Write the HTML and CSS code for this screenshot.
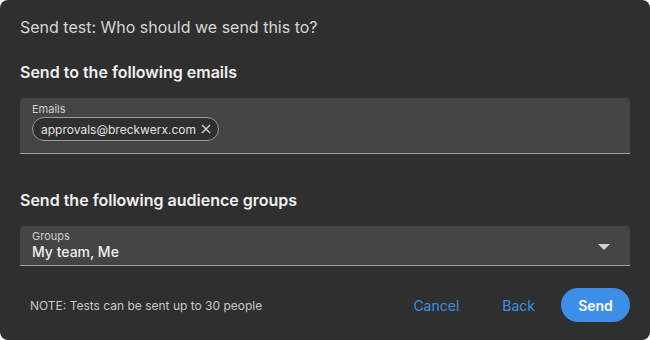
FILE: index.html
```html
<!DOCTYPE html>
<html lang="en">
<head>
    <meta charset="UTF-8">
    <title>Send test</title>
    <link rel="stylesheet" href="styles.css">
</head>
<body>
    <div class="dialog">
        <h1 class="dialog-title">Send test: Who should we send this to?</h1>

        <section class="group">
            <h2>Send to the following emails</h2>
            <div class="field field-emails">
                <label>Emails</label>
                <div class="chips">
                    <span class="chip">approvals@breckwerx.com
                        <svg class="chip-x" width="10" height="10" viewBox="0 0 10 10"><path d="M1 1L9 9M9 1L1 9" stroke="#d0d0d0" stroke-width="1.4" fill="none"/></svg>
                    </span>
                </div>
            </div>
        </section>

        <section class="group group-audience">
            <h2>Send the following audience groups</h2>
            <div class="field field-select">
                <div class="field-text">
                    <label>Groups</label>
                    <div class="value">My team, Me</div>
                </div>
                <svg class="caret" width="12" height="6" viewBox="0 0 12 6"><path d="M0 0H12L6 6Z" fill="#cfcfe0"/></svg>
            </div>
        </section>

        <footer class="dialog-footer">
            <span class="note">NOTE: Tests can be sent up to 30 people</span>
            <div class="actions">
                <button class="btn-text btn-cancel">Cancel</button>
                <button class="btn-text btn-back">Back</button>
                <button class="btn-primary">Send</button>
            </div>
        </footer>
    </div>
</body>
</html>
```

FILE: styles.css
```css
/* General */
body {
    margin: 0;
    background-color: #fff;
    font-family: Inter, "Liberation Sans", sans-serif;
}
.dialog {
    width: 650px;
    height: 340px;
    box-sizing: border-box;
    padding: 17px 20px 0;
    border-radius: 8px;
    background-color: #2f2f2f;
    display: flex;
    flex-direction: column;
}
.dialog-title {
    margin: 0;
    font-size: 16px;
    font-weight: 400;
    line-height: 20px;
    color: #d6d6d6;
}
.group h2 {
    margin: 25px 0 16px;
    font-size: 16px;
    font-weight: 600;
    line-height: 20px;
    color: #f0f0f0;
}
.group-audience h2 {
    margin-top: 36px;
}
/* Fields */
.field {
    background-color: #444;
    border-radius: 4px 4px 0 0;
    border-bottom: 1px solid #a0a0a0;
    box-sizing: border-box;
}
.field label {
    display: block;
    font-size: 11px;
    line-height: 13px;
    color: #d0d0d0;
}
.field-emails {
    height: 56px;
    padding: 5px 12px 0;
}
.chips {
    margin-top: 1px;
    display: flex;
}
.chip {
    display: inline-flex;
    align-items: center;
    gap: 5px;
    height: 24px;
    box-sizing: border-box;
    padding: 0 7px 0 8px;
    border: 1px solid #9a9a9a;
    border-radius: 12px;
    background-color: #2f2f2f;
    font-size: 12px;
    color: #e2e2e2;
}
.field-select {
    height: 40px;
    padding: 4px 20px 0 12px;
    display: flex;
    align-items: center;
    justify-content: space-between;
}
.field-select .field-text {
    align-self: flex-start;
}
.field-select .value {
    font-size: 14px;
    line-height: 17px;
    font-weight: 500;
    color: #f0f0f0;
}
.caret {
    margin-top: -2px;
}
/* Footer */
.dialog-footer {
    margin-top: auto;
    height: 34px;
    margin-bottom: 18px;
    display: flex;
    align-items: center;
    justify-content: space-between;
    padding-left: 10px;
}
.note {
    font-size: 12px;
    color: #c8c8c8;
}
.actions {
    display: flex;
    align-items: center;
}
.actions button {
    font-family: inherit;
    border: none;
    cursor: pointer;
}
.btn-text {
    background: none;
    color: #3e8fe6;
    font-size: 14px;
    padding: 0;
}
.btn-cancel {
    margin-right: 43px;
}
.btn-back {
    margin-right: 26px;
}
.btn-primary {
    background-color: #3d8ee8;
    color: #fff;
    font-size: 14px;
    font-weight: 600;
    height: 34px;
    width: 69px;
    border-radius: 17px;
}
```
